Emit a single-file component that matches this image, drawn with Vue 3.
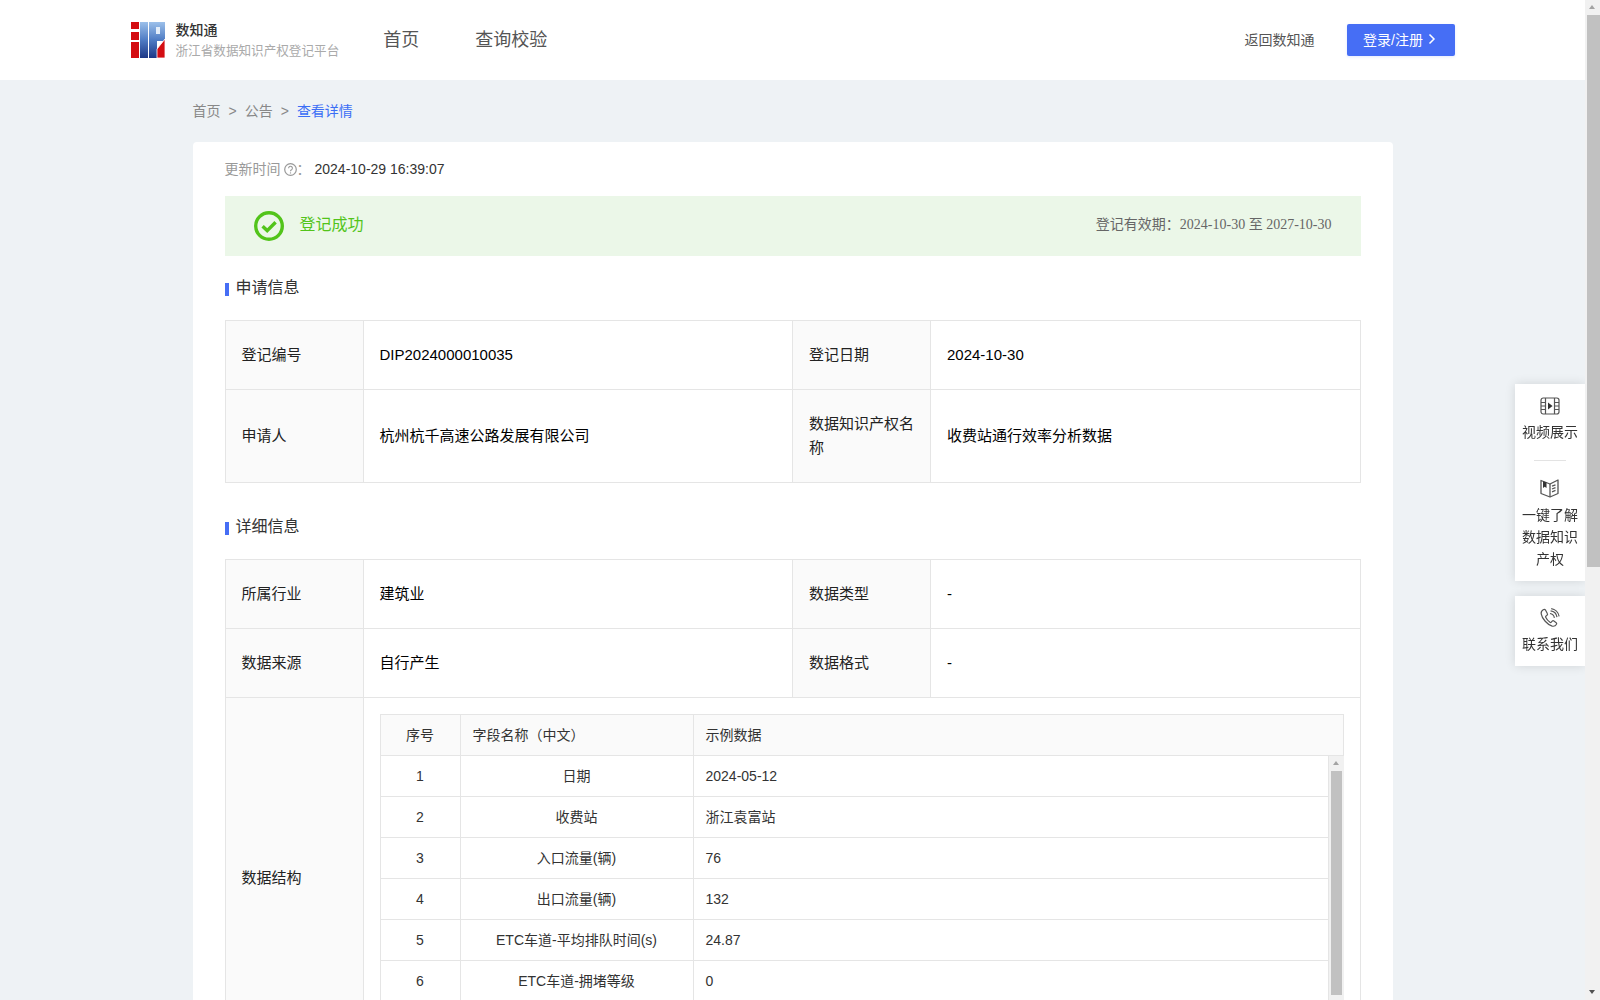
<script setup>
const applyRows = [
  [{ label: '登记编号', value: 'DIP2024000010035' }, { label: '登记日期', value: '2024-10-30' }],
  [{ label: '申请人', value: '杭州杭千高速公路发展有限公司' }, { label: '数据知识产权名称', value: '收费站通行效率分析数据' }]
]
const detailRows = [
  [{ label: '所属行业', value: '建筑业' }, { label: '数据类型', value: '-' }],
  [{ label: '数据来源', value: '自行产生' }, { label: '数据格式', value: '-' }]
]
const fields = [
  ['1', '日期', '2024-05-12'],
  ['2', '收费站', '浙江袁富站'],
  ['3', '入口流量(辆)', '76'],
  ['4', '出口流量(辆)', '132'],
  ['5', 'ETC车道-平均排队时间(s)', '24.87'],
  ['6', 'ETC车道-拥堵等级', '0']
]
</script>

<template>
  <div class="page">
    <header class="topbar">
      <div class="topbar-inner">
        <div class="brand">
          <svg class="logo" viewBox="0 0 34 36" width="34" height="36">
            <defs>
              <linearGradient id="logoBlue" x1="0" y1="0" x2="0" y2="1">
                <stop offset="0" stop-color="#9cc0ea" />
                <stop offset="0.5" stop-color="#4f7cc4" />
                <stop offset="1" stop-color="#1c3786" />
              </linearGradient>
            </defs>
            <rect x="0" y="0" width="8" height="7" fill="#d40d12" />
            <rect x="0" y="10" width="8" height="8" fill="#d40d12" />
            <rect x="0" y="20" width="8" height="16" fill="#d40d12" />
            <rect x="9" y="0" width="8" height="36" fill="url(#logoBlue)" />
            <path d="M18 0H34V19H26V36H18Z" fill="url(#logoBlue)" />
            <rect x="25" y="5" width="4" height="7" fill="#e4eefa" />
            <path d="M34 17V36H26V27Z" fill="#d40d12" stroke="#fff" stroke-width="0.8" />
          </svg>
          <div class="brand-text">
            <div class="brand-name">数知通</div>
            <div class="brand-sub">浙江省数据知识产权登记平台</div>
          </div>
        </div>
        <nav class="nav">
          <span>首页</span>
          <span>查询校验</span>
        </nav>
        <div class="top-actions">
          <span class="back-link">返回数知通</span>
          <button class="login-btn">
            <span>登录/注册</span>
            <svg width="8" height="12" viewBox="0 0 8 12"><path d="M1.500 1.500 6 6l-4.500 4.500" fill="none" stroke="#fff" stroke-width="1.5" /></svg>
          </button>
        </div>
      </div>
    </header>

    <main class="content">
      <div class="crumbs">
        <span>首页</span><i>&gt;</i><span>公告</span><i>&gt;</i><span class="crumb-current">查看详情</span>
      </div>

      <section class="card">
        <div class="update-row">
          <span class="update-label">更新时间</span>
          <svg class="help" width="13" height="13" viewBox="0 0 13 13">
            <circle cx="6.500" cy="6.500" r="5.800" fill="none" stroke="#999" stroke-width="1.2" />
            <path d="M4.600 5.200a1.900 1.900 0 1 1 2.900 1.600c-.7.400-1 .8-1 1.500" fill="none" stroke="#999" stroke-width="1.1" />
            <circle cx="6.500" cy="9.900" r=".7" fill="#999" />
          </svg>
          <span class="update-label colon">：</span>
          <span class="update-value">2024-10-29 16:39:07</span>
        </div>

        <div class="status">
          <div class="status-main">
            <svg width="30" height="30" viewBox="0 0 30 30">
              <circle cx="15" cy="15" r="13.300" fill="none" stroke="#52c41a" stroke-width="3.4" />
              <path d="M8.600 15.200 13.200 19.600 21.600 11.200" fill="none" stroke="#52c41a" stroke-width="3.4" />
            </svg>
            <span class="status-text">登记成功</span>
          </div>
          <div class="status-date">登记有效期：<span class="serif">2024-10-30 至 2027-10-30</span></div>
        </div>

        <h3 class="section-title"><i></i>申请信息</h3>
        <table class="info-table">
          <colgroup><col class="c-label" /><col /><col class="c-label" /><col /></colgroup>
          <tbody>
            <tr v-for="(row, i) in applyRows" :key="i">
              <template v-for="cell in row" :key="cell.label">
                <th>{{ cell.label }}</th>
                <td>{{ cell.value }}</td>
              </template>
            </tr>
          </tbody>
        </table>

        <h3 class="section-title second"><i></i>详细信息</h3>
        <table class="info-table">
          <colgroup><col class="c-label" /><col /><col class="c-label" /><col /></colgroup>
          <tbody>
            <tr v-for="(row, i) in detailRows" :key="i">
              <template v-for="cell in row" :key="cell.label">
                <th>{{ cell.label }}</th>
                <td>{{ cell.value }}</td>
              </template>
            </tr>
            <tr>
              <th>数据结构</th>
              <td colspan="3" class="struct-cell">
                <div class="fields">
                  <div class="fields-row fields-head">
                    <div>序号</div>
                    <div class="left">字段名称（中文）</div>
                    <div class="left">示例数据</div>
                  </div>
                  <div class="fields-scroll">
                    <div v-for="f in fields" :key="f[0]" class="fields-row">
                      <div>{{ f[0] }}</div>
                      <div>{{ f[1] }}</div>
                      <div class="left">{{ f[2] }}</div>
                    </div>
                    <div class="scrollbar">
                      <span class="arrow-up"></span>
                      <span class="thumb inner-thumb"></span>
                    </div>
                  </div>
                </div>
              </td>
            </tr>
          </tbody>
        </table>
      </section>
    </main>

    <aside class="float-tools">
      <div class="tool-panel">
        <div class="tool">
          <svg width="20" height="20" viewBox="0 0 20 20" fill="none" stroke="#555" stroke-width="1.2">
            <rect x="1" y="2" width="18" height="16" rx="2.200" />
            <path d="M5.500 2v16M14.500 2v16M1 6.500h4.500M1 10h4.500M1 13.500h4.500M14.500 6.500H19M14.500 10H19M14.500 13.500H19" />
            <path d="M8 6.600 12.600 10 8 13.400Z" fill="#333" stroke="none" />
          </svg>
          <span>视频展示</span>
        </div>
        <div class="tool-divider"></div>
        <div class="tool tool-book">
          <svg width="20" height="20" viewBox="0 0 20 20" fill="none" stroke="#555" stroke-width="1.3">
            <path d="M1 2.500 10 6l8-4v13.500L10 19 1 15.500Z" stroke-linejoin="round" />
            <path d="M10 6v13" />
            <path d="M3 3.200 6.500 4.500V10L4.700 8.800 3 10Z" fill="#333" stroke="none" />
            <path d="M12 8.200l3.500-1.400M12 11l3.500-1.400M12 13.800l3.500-1.400" />
          </svg>
          <span>一键了解<br />数据知识<br />产权</span>
        </div>
      </div>
      <div class="tool-panel">
        <div class="tool">
          <svg width="20" height="20" viewBox="0 0 20 20" fill="none" stroke="#555" stroke-width="1.2">
            <path d="M3.200 1.800c-1.400.9-2.300 2.200-2 4 .8 4.800 6.200 11 11 12.300 1.700.4 3.400-.3 4.300-1.800.3-.6.200-1.200-.3-1.600l-2.300-1.700c-.6-.4-1.200-.3-1.700.2l-.9 1c-.4.400-.9.400-1.300.1-1.900-1.300-3.400-3-4.300-5-.2-.4-.1-.9.300-1.200l1-.8c.6-.5.700-1.200.3-1.800L5.600 2.200C5 1.400 4 1.300 3.200 1.800Z" />
            <path d="M10 5.500c2.300.3 4 2 4.400 4.300" />
            <path d="M10.600 2.800c3.400.4 5.900 3 6.400 6.400" />
            <path d="M11.200.6c4 .5 7.200 3.700 7.900 7.700" />
          </svg>
          <span>联系我们</span>
        </div>
      </div>
    </aside>

    <div class="scrollbar page-scrollbar">
      <span class="arrow-up"></span>
      <span class="thumb page-thumb"></span>
      <span class="arrow-down"></span>
    </div>
  </div>
</template>

<style>
html, body {
  margin: 0;
  padding: 0;
}
</style>

<style scoped>
.page {
  box-sizing: border-box;
  min-height: 1757px;
  padding-right: 15px;
  background: #eef2f5;
  font-family: "Liberation Sans", "Noto Sans CJK SC", sans-serif;
  font-size: 14px;
  color: #333;
}
.topbar {
  height: 80px;
  background: #fff;
}
.topbar-inner {
  width: 1324px;
  height: 100%;
  margin: 0 auto;
  display: flex;
  align-items: center;
}
.brand {
  display: flex;
  align-items: center;
  gap: 11px;
}
.logo {
  display: block;
}
.brand-text {
  margin-top: 1px;
}
.brand-name {
  font-size: 14px;
  line-height: 20px;
  font-weight: 500;
  color: #333;
}
.brand-sub {
  font-size: 12.6px;
  line-height: 22px;
  color: #aaa;
}
.nav {
  display: flex;
  gap: 56px;
  margin: 0 0 4px 44px;
  font-size: 18px;
  color: #555;
}
.top-actions {
  display: flex;
  align-items: center;
  gap: 32px;
  margin-left: auto;
}
.back-link {
  margin-bottom: 3px;
  color: #555;
}
.login-btn {
  width: 108px;
  height: 32px;
  padding: 0 2px 2px 0;
  border: 0;
  border-radius: 2px;
  background: #466ef5;
  color: #fff;
  font: inherit;
  display: flex;
  align-items: center;
  justify-content: center;
  gap: 5px;
  box-shadow: 0 1px 3px rgba(70, 110, 245, 0.15);
}
.content {
  width: 1200px;
  margin: 0 auto;
  padding: 19px 0 40px;
}
.crumbs {
  height: 22px;
  line-height: 24px;
  margin-bottom: 21px;
  color: #888;
  display: flex;
}
.crumbs i {
  font-style: normal;
  margin: 0 8px;
}
.crumb-current {
  color: #3b6ef5;
}
.card {
  min-height: 1543px;
  padding: 16px 32px;
  background: #fff;
  border-radius: 4px;
}
.update-row {
  height: 22px;
  margin-bottom: 16px;
  display: flex;
  align-items: center;
}
.update-label {
  margin-bottom: 2px;
  color: #999;
}
.help {
  margin-left: 3px;
}
.colon {
  width: 18px;
}
.update-value {
  color: #333;
}
.status {
  height: 60px;
  padding: 0 29px;
  background: #ebf7e8;
  display: flex;
  align-items: center;
  justify-content: space-between;
}
.status-main {
  display: flex;
  align-items: center;
  gap: 16px;
}
.status-text {
  margin-bottom: 6px;
  font-size: 16px;
  color: #52c41a;
}
.status-date {
  margin-bottom: 6px;
  color: #666;
}
.serif {
  font-family: "Liberation Serif", "Noto Sans CJK SC", serif;
}
.section-title {
  margin: 20px 0;
  height: 24px;
  line-height: 24px;
  font-size: 16px;
  font-weight: 400;
  color: #333;
  display: flex;
  align-items: center;
}
.section-title.second {
  margin-top: 32px;
}
.section-title i {
  width: 4px;
  height: 13px;
  margin: 3px 7px 0 0;
  background: #466ef5;
}
.info-table {
  width: 100%;
  table-layout: fixed;
  border-collapse: collapse;
  font-size: 15px;
  line-height: 24px;
}
.c-label {
  width: 138px;
}
.info-table th,
.info-table td {
  padding: 22px 16px;
  border: 1px solid #e5e5e5;
  font-weight: 400;
  text-align: left;
  color: #000;
}
.info-table th {
  background: #fafafa;
  color: #222;
}
.info-table td.struct-cell {
  padding: 16px;
}
.fields {
  font-size: 14px;
  line-height: 40px;
  color: #333;
}
.fields-row {
  display: grid;
  grid-template-columns: 81px 233px 1fr;
  border-bottom: 1px solid #e5e5e5;
  text-align: center;
}
.fields-row > div {
  height: 40px;
  border-right: 1px solid #e5e5e5;
}
.fields-row .left {
  text-align: left;
  padding-left: 12px;
}
.fields-row > div:first-child {
  border-left: 1px solid #e5e5e5;
}
.fields-head {
  border-top: 1px solid #e5e5e5;
  background: #fafafa;
}
.fields-scroll {
  position: relative;
  height: 285px;
  padding-right: 15px;
  overflow: hidden;
}
.scrollbar {
  position: absolute;
  top: 0;
  right: 0;
  bottom: 0;
  width: 15px;
  background: #f1f1f1;
}
.page-scrollbar {
  position: fixed;
  z-index: 5;
}
.thumb {
  position: absolute;
  top: 15px;
  background: #c1c1c1;
}
.page-thumb {
  left: 2px;
  right: 0;
  height: 552px;
}
.inner-thumb {
  left: 2px;
  right: 2px;
  height: 224px;
}
.arrow-up,
.arrow-down {
  position: absolute;
  left: 4px;
  width: 0;
  height: 0;
  border-left: 3.5px solid transparent;
  border-right: 3.5px solid transparent;
}
.arrow-up {
  top: 5px;
  border-bottom: 4px solid #a3a3a3;
}
.arrow-down {
  bottom: 6px;
  border-top: 4px solid #505050;
}
.float-tools {
  position: fixed;
  top: 384px;
  right: 15px;
  width: 70px;
  display: flex;
  flex-direction: column;
  gap: 15px;
  line-height: 22px;
  text-align: center;
  color: #333;
}
.tool-panel {
  padding: 12px 0 10px;
  background: #fff;
  box-shadow: 0 0 10px rgba(0, 0, 0, 0.12);
}
.tool-panel + .tool-panel {
  padding-bottom: 11px;
}
.tool {
  display: flex;
  flex-direction: column;
  align-items: center;
  gap: 5px;
}
.tool-book {
  gap: 6px;
  margin-bottom: 1px;
}
.tool svg {
  display: block;
}
.tool-divider {
  width: 32px;
  height: 1px;
  margin: 17px auto;
  background: #e3e3e3;
}
</style>
